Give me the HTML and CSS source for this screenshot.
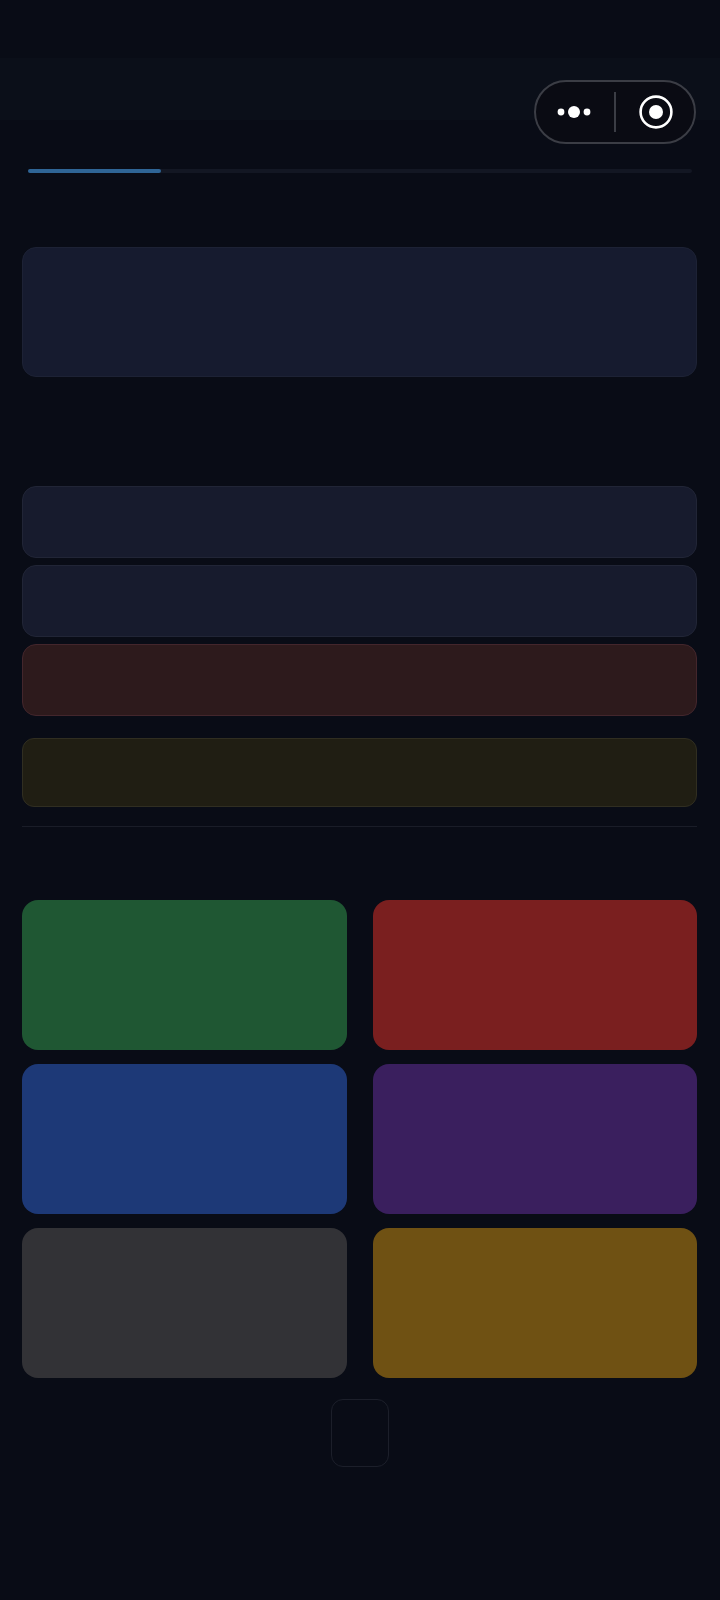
FILE: index.html
```html
<!DOCTYPE html>
<html lang="en">
<head>
  <meta charset="UTF-8" />
  <meta name="viewport" content="width=device-width, initial-scale=1.0" />
  <title>Game</title>
  <link rel="stylesheet" href="styles.css">
</head>
<body>
  <header class="topbar">
    <div class="capsule">
      <div class="capsule-part capsule-left">
        <svg width="34" height="12" viewBox="0 0 34 12">
          <circle cx="4" cy="6" r="3.4" fill="#fff" />
          <circle cx="17" cy="6" r="6" fill="#fff" />
          <circle cx="30" cy="6" r="3.4" fill="#fff" />
        </svg>
      </div>
      <div class="capsule-line"></div>
      <div class="capsule-part capsule-right">
        <svg width="34" height="34" viewBox="0 0 34 34">
          <circle cx="17" cy="17" r="15.4" fill="none" stroke="#fff" stroke-width="2.6" />
          <circle cx="17" cy="17" r="7" fill="#fff" />
        </svg>
      </div>
    </div>
  </header>

  <div class="progress">
    <div class="progress-fill"></div>
  </div>

  <main class="content">
    <div class="question"></div>

    <div class="options">
      <div class="option"></div>
      <div class="option"></div>
      <div class="option option-wrong"></div>
    </div>

    <div class="hint"></div>
    <hr class="divider" />

    <div class="answers">
      <div class="answer green"></div>
      <div class="answer red"></div>
      <div class="answer blue"></div>
      <div class="answer purple"></div>
      <div class="answer gray"></div>
      <div class="answer gold"></div>
    </div>

    <div class="next-box"></div>
  </main>
</body>
</html>
```

FILE: styles.css
```css
body {
  box-sizing: border-box;
  margin: 0;
  height: 1600px;
  padding-top: 58px;
  background-color: #090c16;
  font-family: "Liberation Sans", Arial, sans-serif;
}

.topbar {
  box-sizing: border-box;
  height: 62px;
  padding: 22px 24px 0 0;
  display: flex;
  justify-content: flex-end;
  align-items: flex-start;
  background-color: #0b0f19;
}

.capsule {
  box-sizing: border-box;
  width: 162px;
  height: 64px;
  display: flex;
  align-items: center;
  flex-shrink: 0;
  background-color: #0a0b13;
  border: 2px solid #3b3d45;
  border-radius: 32px;
}

.capsule-part {
  box-sizing: border-box;
  flex: 1;
  display: flex;
  justify-content: center;
  align-items: center;
}

.capsule-left {
  padding-right: 2px;
}

.capsule-right {
  padding-left: 2px;
}

.capsule-line {
  width: 2px;
  height: 40px;
  background-color: #3b3d45;
}

.progress {
  height: 4px;
  margin: 49px 28px 0;
  background-color: #131723;
  border-radius: 2px;
}

.progress-fill {
  width: 20%;
  height: 100%;
  background-color: #2f6596;
  border-radius: 2px;
}

.content {
  padding: 0 23px 0 22px;
}

.question {
  box-sizing: border-box;
  height: 130px;
  margin-top: 74px;
  background-color: #161b2f;
  border: 1px solid #1d2235;
  border-radius: 14px;
}

.options {
  margin-top: 109px;
  display: flex;
  flex-direction: column;
  gap: 7.5px;
}

.option {
  box-sizing: border-box;
  height: 71.5px;
  background-color: #171b2d;
  border: 1px solid #212536;
  border-radius: 14px;
}

.option-wrong {
  height: 72px;
  background-color: #2d1a1c;
  border-color: #43262c;
}

.hint {
  box-sizing: border-box;
  height: 69px;
  margin-top: 22px;
  background-color: #201e13;
  border: 1px solid #302e21;
  border-radius: 12px;
}

.divider {
  height: 1px;
  margin: 19px 0 0;
  border: none;
  background-color: #1a1d28;
}

.answers {
  margin-top: 72.5px;
  display: grid;
  grid-template-columns: 1fr 1fr;
  column-gap: 26px;
  row-gap: 14px;
}

.answer {
  height: 150px;
  border-radius: 16px;
}

.green { background-color: #1f5733; }
.red { background-color: #7a1f1f; }
.blue { background-color: #1d3977; }
.purple { background-color: #3a1f5e; }
.gray { background-color: #323236; }
.gold { background-color: #6f5113; }

.next-box {
  box-sizing: border-box;
  width: 58px;
  height: 68px;
  margin: 21px auto 0;
  border: 1px solid #1c1f2a;
  border-radius: 12px;
}
```
